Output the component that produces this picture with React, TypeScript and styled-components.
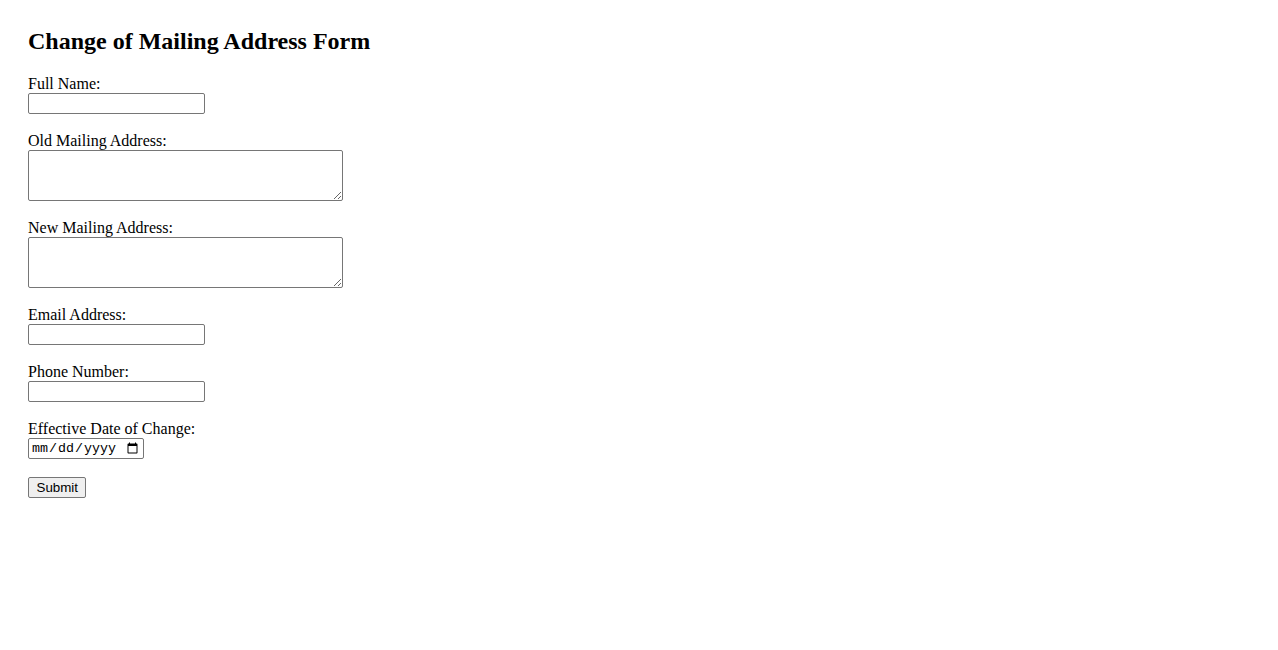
import React from "react"
import styled, { createGlobalStyle } from "styled-components"

const GlobalStyle = createGlobalStyle`
	body {
		margin: 0;
		background: #ffffff;
		color: #000000;
		font-family: "Liberation Serif", "Times New Roman", serif;
		font-size: 16px;
	}
`

const Page = styled.div`
	padding: 28px;
`

const Title = styled.h2`
	margin: 0 0 21px;
	font-size: 24px;
	line-height: 26px;
	font-weight: bold;
`

const Form = styled.form`
	display: flex;
	flex-direction: column;
	align-items: flex-start;
`

const Field = styled.div`
	display: flex;
	flex-direction: column;
	align-items: flex-start;
	margin-bottom: 18px;
`

const Label = styled.label`
	display: block;
	line-height: 18px;
`

const TextInput = styled.input<{ $width?: number }>`
	box-sizing: border-box;
	width: ${(p) => p.$width ?? 177}px;
	height: 21px;
	margin: 0;
	padding: 1px 2px;
	border: 1px solid #767676;
	border-radius: 2px;
	background: #ffffff;
	font-family: "Liberation Sans", Arial, sans-serif;
	font-size: 13.33px;
`

const DateInput = styled(TextInput)`
	font-family: "Liberation Mono", "Courier New", monospace;
	font-size: 13.33px;
	padding: 0 2px;
`

const TextArea = styled.textarea`
	box-sizing: border-box;
	display: block;
	width: 315px;
	height: 51px;
	margin: 0;
	padding: 2px;
	border: 1px solid #767676;
	border-radius: 2px;
	font-family: "Liberation Mono", monospace;
	font-size: 13.33px;
`

const SubmitButton = styled.button`
	box-sizing: border-box;
	height: 21px;
	margin: 0;
	padding: 1px 7.5px;
	border: 1px solid #767676;
	border-radius: 2px;
	background: #efefef;
	color: #000000;
	font-family: "Liberation Sans", Arial, sans-serif;
	font-size: 13.33px;
	line-height: 17px;
`

const fields = [
	{ id: "fullName", label: "Full Name:", kind: "text" },
	{ id: "oldAddress", label: "Old Mailing Address:", kind: "area" },
	{ id: "newAddress", label: "New Mailing Address:", kind: "area" },
	{ id: "email", label: "Email Address:", kind: "email" },
	{ id: "phone", label: "Phone Number:", kind: "tel" },
	{ id: "effectiveDate", label: "Effective Date of Change:", kind: "date" },
]

export default function App() {
	return (
		<>
			<GlobalStyle />
			<Page>
				<Title>Change of Mailing Address Form</Title>
				<Form onSubmit={(e) => e.preventDefault()}>
					{fields.map((f) => (
						<Field key={f.id}>
							<Label htmlFor={f.id}>{f.label}</Label>
							{f.kind === "area" ? (
								<TextArea id={f.id} name={f.id} />
							) : f.kind === "date" ? (
								<DateInput id={f.id} name={f.id} type="date" $width={116} />
							) : (
								<TextInput id={f.id} name={f.id} type={f.kind} />
							)}
						</Field>
					))}
					<SubmitButton type="submit">Submit</SubmitButton>
				</Form>
			</Page>
		</>
	)
}
